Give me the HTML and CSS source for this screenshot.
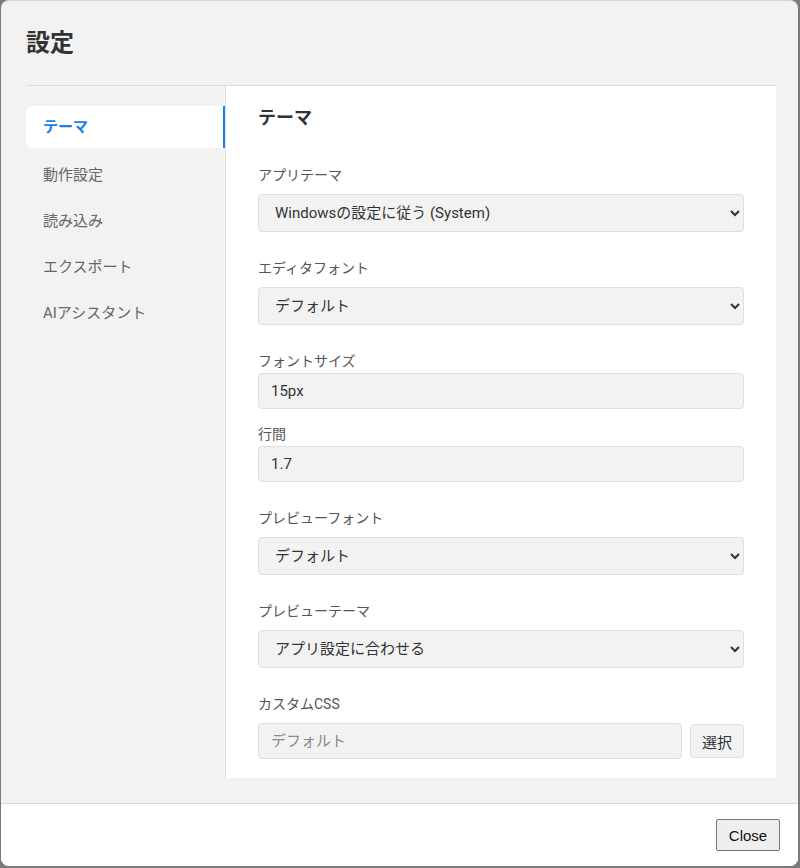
FILE: index.html
```html
<!DOCTYPE html>
<html lang="ja">
<head>
<meta charset="utf-8">
<title>設定</title>
<link rel="stylesheet" href="styles.css">
</head>
<body>
<div class="dialog">
  <header class="dlg-header">
    <h1 class="dlg-title">設定</h1>
  </header>
  <div class="dlg-main">
    <nav class="sidebar">
      <div class="nav-item active">テーマ</div>
      <div class="nav-item">動作設定</div>
      <div class="nav-item">読み込み</div>
      <div class="nav-item">エクスポート</div>
      <div class="nav-item">AIアシスタント</div>
    </nav>
    <section class="panel">
      <h2 class="panel-title">テーマ</h2>
      <div class="field first">
        <label class="lbl">アプリテーマ</label>
        <select class="ctl sel"><option>Windowsの設定に従う (System)</option></select>
      </div>
      <div class="field">
        <label class="lbl">エディタフォント</label>
        <select class="ctl sel"><option>デフォルト</option></select>
      </div>
      <div class="field compact">
        <label class="lbl">フォントサイズ</label>
        <input class="ctl inp" type="text" value="15px">
      </div>
      <div class="field compact tight">
        <label class="lbl">行間</label>
        <input class="ctl inp" type="text" value="1.7">
      </div>
      <div class="field">
        <label class="lbl">プレビューフォント</label>
        <select class="ctl sel"><option>デフォルト</option></select>
      </div>
      <div class="field">
        <label class="lbl">プレビューテーマ</label>
        <select class="ctl sel"><option>アプリ設定に合わせる</option></select>
      </div>
      <div class="field">
        <label class="lbl">カスタムCSS</label>
        <div class="row">
          <input class="ctl inp grow" type="text" placeholder="デフォルト" readonly>
          <button class="pick">選択</button>
        </div>
      </div>
    </section>
  </div>
  <footer class="dlg-footer">
    <button class="close">Close</button>
  </footer>
</div>
</body>
</html>
```
FILE: styles.css
```css
html, body {
  margin: 0;
  padding: 0;
  height: 100%;
}
body {
  background: #7a7a7a;
  font-family: "Roboto", "Noto Sans CJK JP", sans-serif;
  color: #333;
  padding-left: 1px;
  box-sizing: border-box;
}
.dialog {
  width: 797px;
  height: 866px;
  background: #f2f2f2;
  border-radius: 8px;
  display: flex;
  flex-direction: column;
  overflow: hidden;
  box-sizing: border-box;
  border-top: 1px solid #d6d6d6;
}
.dlg-header {
  height: 84px;
  display: flex;
  align-items: center;
  padding-left: 25px;
  flex-shrink: 0;
}
.dlg-title {
  margin: 0;
  font-size: 24px;
  font-weight: 700;
  color: #333;
  line-height: 30px;
}
.dlg-main {
  flex: 1;
  display: flex;
  margin: 0 22px 25px 25px;
  border-top: 1px solid #dcdcdc;
  min-height: 0;
}
.sidebar {
  width: 199px;
  flex-shrink: 0;
  padding-top: 20px;
  display: flex;
  flex-direction: column;
  gap: 4px;
}
.nav-item {
  height: 42px;
  line-height: 42px;
  padding-left: 17px;
  font-size: 15px;
  color: #666;
  border-radius: 6px 0 0 6px;
}
.nav-item.active {
  background: #fff;
  color: #1a7fe8;
  font-weight: 700;
  border-right: 2px solid #1a7fe8;
  margin-bottom: 2px;
}
.panel {
  flex: 1;
  background: #fff;
  border-left: 1px solid #e2e2e2;
  padding: 20px 32px 20px 32px;
}
.panel-title {
  margin: 0;
  font-size: 18px;
  font-weight: 700;
  line-height: 24px;
  color: #333;
}
.field {
  display: flex;
  flex-direction: column;
  margin-top: 26px;
}
.field.first {
  margin-top: 35px;
}
.field.tight {
  margin-top: 15px;
}
.lbl {
  font-size: 14px;
  line-height: 20px;
  color: #555;
  margin-bottom: 9px;
}
.field.compact .lbl {
  margin-bottom: 2px;
}
.ctl {
  box-sizing: border-box;
  width: 486px;
  background: #f2f2f2;
  border: 1px solid #dedede;
  border-radius: 4px;
  font-family: "Roboto", "Noto Sans CJK JP", sans-serif;
  font-size: 15px;
  color: #333;
  margin: 0;
  outline: none;
}
.sel {
  height: 38px;
  padding: 0 10px 0 12px;
}
.inp {
  height: 36px;
  padding: 0 12px;
}
.inp::placeholder {
  color: #888;
}
.row {
  display: flex;
  align-items: center;
  gap: 8px;
  width: 486px;
}
.inp.grow {
  flex: 1;
  width: auto;
  min-width: 0;
}
.pick {
  width: 54px;
  height: 34px;
  background: #f2f2f2;
  border: 1px solid #dedede;
  border-radius: 4px;
  font-family: "Roboto", "Noto Sans CJK JP", sans-serif;
  font-size: 15px;
  color: #333;
  padding: 0;
}
.dlg-footer {
  height: 63px;
  flex-shrink: 0;
  background: #fff;
  border-top: 1px solid #d9d9d9;
  box-sizing: border-box;
  display: flex;
  justify-content: flex-end;
  align-items: center;
  padding-right: 18px;
}
.close {
  width: 64px;
  height: 32px;
  font-family: "Liberation Sans", Arial, sans-serif;
  font-size: 15px;
  color: #111;
  background: #efefef;
  border: 1px solid #767676;
  border-radius: 2px;
  padding: 0;
}
```
